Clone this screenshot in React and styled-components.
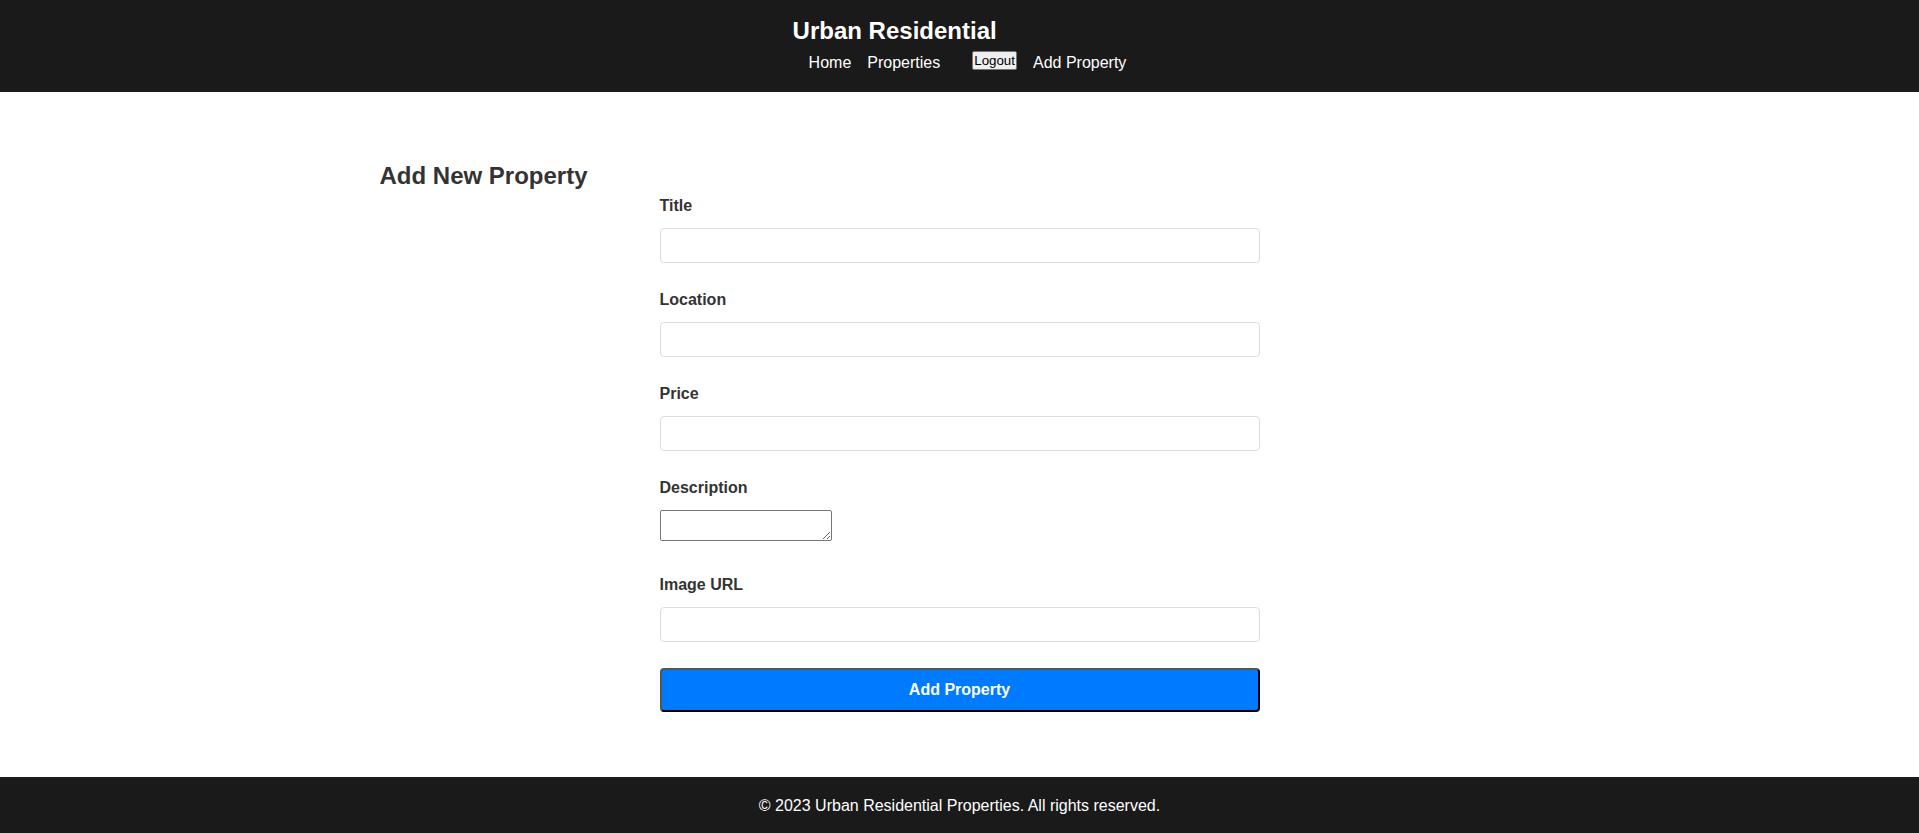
import React from 'react';
import styled, { createGlobalStyle } from 'styled-components';

const GlobalStyle = createGlobalStyle`
  * {
    box-sizing: border-box;
  }
  body {
    margin: 0;
    font-family: "Liberation Sans", Arial, sans-serif;
    background: #fff;
    color: #333;
  }
`;

const Header = styled.header`
  background: #1a1a1a;
  color: #fff;
  display: flex;
  justify-content: center;
  padding: 17px 0 20px;
`;

const Brand = styled.h1`
  margin: 0 0 8px;
  font-size: 24px;
  font-weight: bold;
  line-height: 28px;
`;

const NavList = styled.ul`
  list-style: none;
  margin: 0;
  padding: 0;
  display: flex;
  align-items: flex-start;
  height: 19px;
`;

const NavItem = styled.li`
  margin-left: ${({ $wide }) => ($wide ? '32px' : '16px')};
  line-height: 19px;
`;

const NavLink = styled.a`
  color: #fff;
  text-decoration: none;
  font-size: 16px;
`;

const LogoutButton = styled.button`
  display: block;
  margin-top: -2px;
  font-family: "Liberation Sans", Arial, sans-serif;
  font-size: 13.33px;
  line-height: 15px;
  padding: 1px 1px;
  color: #000;
  background: #efefef;
  border: 1px solid #767676;
  border-radius: 2px;
  cursor: pointer;
`;

const Main = styled.main`
  max-width: 1200px;
  margin: 0 auto;
  padding: 50px 20px 65px;
`;

const Heading = styled.h2`
  margin: 20px 0 5px;
  font-size: 24px;
  line-height: 28px;
  color: #333;
`;

const Form = styled.form`
  max-width: 600px;
  margin: 0 auto;
`;

const FormGroup = styled.div`
  margin-bottom: ${({ $loose }) => ($loose ? '33px' : '26px')};
`;

const Label = styled.label`
  display: block;
  font-size: 16px;
  font-weight: bold;
  line-height: 22px;
  margin-bottom: 11px;
  color: #333;
`;

const Input = styled.input`
  display: block;
  width: 100%;
  height: 35px;
  padding: 8px;
  font-size: 14px;
  border: 1px solid #ddd;
  border-radius: 4px;
  outline: none;
`;

const TextArea = styled.textarea`
  display: block;
  width: 172px;
  height: 31px;
  padding: 2px;
  font-family: "Liberation Mono", monospace;
  font-size: 13px;
  border: 1px solid #767676;
  border-radius: 2px;
  resize: both;
`;

const SubmitButton = styled.button`
  display: block;
  width: 100%;
  height: 44px;
  font-family: "Liberation Sans", Arial, sans-serif;
  font-size: 16px;
  font-weight: bold;
  color: #fff;
  background: #007bff;
  border: 2px solid;
  border-color: #555 #000 #000 #555;
  border-radius: 4px;
  cursor: pointer;
`;

const Footer = styled.footer`
  background: #1a1a1a;
  color: #fff;
  text-align: center;
  padding: 20px 0;
  font-size: 16px;
  line-height: 18px;
`;

const fields = [
  { id: 'title', label: 'Title' },
  { id: 'location', label: 'Location' },
  { id: 'price', label: 'Price' },
  { id: 'description', label: 'Description', multiline: true },
  { id: 'image', label: 'Image URL' },
];

export default function App() {
  return (
    <>
      <GlobalStyle />
      <Header>
        <div>
          <Brand>Urban Residential</Brand>
          <nav>
            <NavList>
              <NavItem>
                <NavLink href="#">Home</NavLink>
              </NavItem>
              <NavItem>
                <NavLink href="#">Properties</NavLink>
              </NavItem>
              <NavItem $wide>
                <LogoutButton>Logout</LogoutButton>
              </NavItem>
              <NavItem>
                <NavLink href="#">Add Property</NavLink>
              </NavItem>
            </NavList>
          </nav>
        </div>
      </Header>
      <Main>
        <Heading>Add New Property</Heading>
        <Form onSubmit={e => e.preventDefault()}>
          {fields.map(f => (
            <FormGroup key={f.id} $loose={f.multiline}>
              <Label htmlFor={f.id}>{f.label}</Label>
              {f.multiline ? <TextArea id={f.id} /> : <Input id={f.id} type="text" />}
            </FormGroup>
          ))}
          <SubmitButton type="submit">Add Property</SubmitButton>
        </Form>
      </Main>
      <Footer>© 2023 Urban Residential Properties. All rights reserved.</Footer>
    </>
  );
}
